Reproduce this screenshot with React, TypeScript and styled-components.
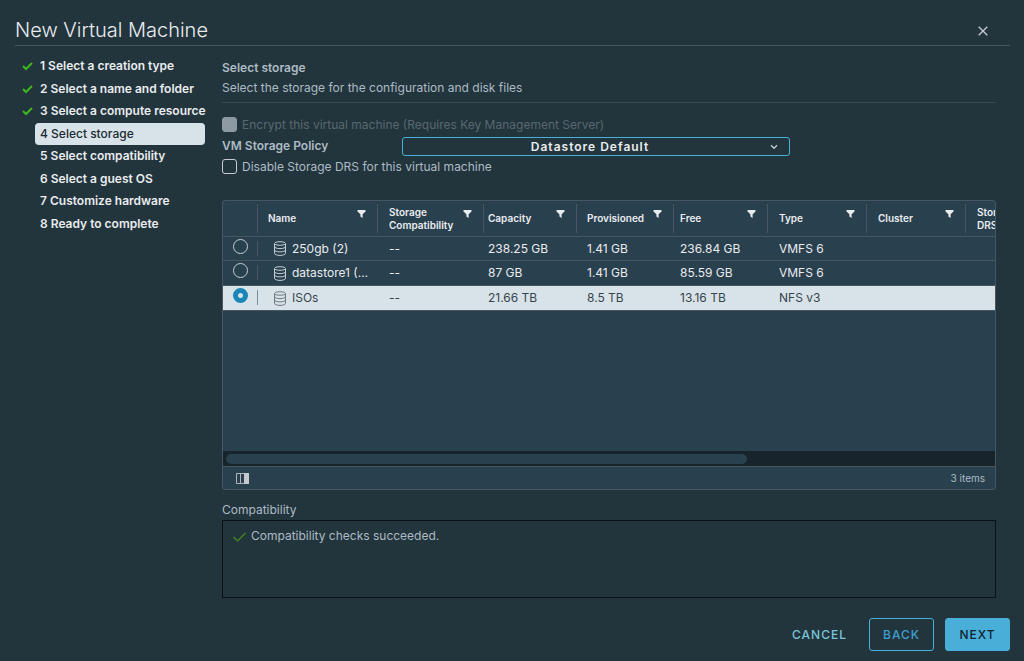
import React, { useState } from "react";
import styled, { createGlobalStyle, css } from "styled-components";

const color = {
  page: "#22343c",
  panel: "#29404e",
  line: "#465763",
  text: "#adbbc4",
  strong: "#e9ecef",
  selected: "#d8e3e9",
  accent: "#49afd9",
  track: "#17242b",
};

const GlobalStyle = createGlobalStyle`
  *, *::before, *::after { box-sizing: border-box; }
  body {
    margin: 0;
    background: ${color.page};
    color: ${color.text};
    font: 400 12px/20px Inter, "Liberation Sans", sans-serif;
  }
  button, input, select { font: inherit; color: inherit; margin: 0; }
`;

const Wizard = styled.main`
  min-height: 100vh;
  display: flex;
  flex-direction: column;
  padding: 15px 14px 10px 15px;
`;

const Header = styled.header`
  display: flex;
  align-items: center;
  justify-content: space-between;
  height: 31px;
  padding-right: 19px;
  border-bottom: 1px solid ${color.line};
`;

const Title = styled.h1`
  margin: 0;
  font-size: 20px;
  line-height: 30px;
  font-weight: 300;
  color: ${color.strong};
`;

const CloseButton = styled.button`
  display: flex;
  padding: 4px 2px 2px;
  border: 0;
  background: none;
  color: #c5cdd2;
`;

const Body = styled.div`
  flex: 1;
  display: flex;
  gap: 17px;
  padding: 8px 14px 20px 0;
`;

const Steps = styled.ol`
  flex: none;
  display: grid;
  grid-auto-rows: 1fr;
  width: 190px;
  height: 180px;
  margin: 1px 0 0;
  padding: 0;
  list-style: none;
`;

const Step = styled.li`
  display: grid;
  grid-template-columns: 20px 1fr;
  align-items: center;
`;

const StepMark = styled.span`
  display: flex;
  padding-left: 7px;
`;

const StepButton = styled.button<{ $current?: boolean }>`
  min-width: 0;
  height: 100%;
  padding: 0 0 0 5px;
  border: 0;
  border-radius: 4px;
  background: ${(p) => (p.$current ? color.selected : "none")};
  color: ${(p) => (p.$current ? "#1b2a32" : color.strong)};
  font-weight: ${(p) => (p.$current ? 500 : 600)};
  text-align: left;
  white-space: nowrap;
`;

const Content = styled.section`
  flex: 1;
  min-width: 0;
  display: flex;
  flex-direction: column;
`;

const Intro = styled.div`
  padding: 4px 0;
  border-bottom: 1px solid #3a4a55;
  margin-bottom: 11px;
`;

const PageTitle = styled.h2`
  margin: 0;
  font-size: 12px;
  line-height: 20px;
  font-weight: 600;
`;

const IntroText = styled.p`
  margin: 0;
`;

const OptionRow = styled.div<{ $disabled?: boolean }>`
  display: flex;
  align-items: center;
  gap: 5px;
  height: 21px;
  color: ${(p) => (p.$disabled ? "#596870" : color.text)};
`;

const Checkbox = styled.input`
  appearance: none;
  width: 15px;
  height: 15px;
  border: 1px solid #c5cdd2;
  border-radius: 3px;
  &:disabled { background: #8d9aa2; border-color: #8d9aa2; }
  &:checked { background: ${color.accent}; }
`;

const PolicyLabel = styled.label`
  width: 175px;
  font-weight: 600;
`;

const SelectFrame = styled.div`
  display: grid;
  flex: 0 1 388px;
  align-self: flex-end;
  align-items: center;
  & > * { grid-area: 1 / 1; }
  svg { justify-self: end; margin-right: 12px; pointer-events: none; }
`;

const PolicySelect = styled.select`
  appearance: none;
  width: 100%;
  height: 19px;
  padding: 0 20px 0 8px;
  border: 1px solid ${color.accent};
  border-radius: 3px;
  background: ${color.page};
  color: ${color.strong};
  line-height: 16px;
  font-weight: 600;
  letter-spacing: 1px;
  text-align-last: center;
`;

const Datagrid = styled.div`
  flex: 1;
  display: flex;
  flex-direction: column;
  margin-top: 23px;
  border: 1px solid ${color.line};
  border-radius: 3px;
  background: ${color.panel};
  overflow: hidden;
`;

const TableViewport = styled.div`
  flex: 1;
  overflow: hidden;
`;

const Table = styled.table`
  table-layout: fixed;
  width: 1148px;
  border-collapse: separate;
  border-spacing: 0;
  font-size: 12px;
  color: ${color.strong};
  tbody tr:first-child td { height: 24px; }
`;

const Col = styled.col<{ $width: number }>`
  width: ${(p) => p.$width}px;
`;

const HeadCell = styled.th<{ $pad: number }>`
  height: 36px;
  padding: 3px 0;
  border-bottom: 1px solid ${color.line};
  text-align: left;
  vertical-align: middle;
  font-size: 10px;
  line-height: 13px;
  font-weight: 600;
  & > div {
    display: flex;
    align-items: center;
    justify-content: space-between;
    height: 29px;
    padding: 0 11px 0 ${(p) => p.$pad}px;
    border-right: 1px solid ${color.line};
  }
`;

const HeadLabel = styled.span`
  white-space: pre-line;
`;

const FilterButton = styled.button`
  display: flex;
  align-self: flex-start;
  padding: 6px 0 0;
  border: 0;
  background: none;
`;

const cellTone = css<{ $selected?: boolean }>`
  background: ${(p) => (p.$selected ? color.selected : "none")};
  color: ${(p) => (p.$selected ? "#37444c" : color.strong)};
`;

const Cell = styled.td<{ $pad: number; $selected?: boolean }>`
  height: 25px;
  padding: 0 0 0 ${(p) => p.$pad}px;
  border-bottom: 1px solid ${color.line};
  line-height: 20px;
  white-space: nowrap;
  ${cellTone}
`;

const PickCell = styled.td<{ $selected?: boolean }>`
  height: 25px;
  padding: 4px 0 0;
  border-bottom: 1px solid ${color.line};
  vertical-align: top;
  ${cellTone}
  & > div {
    display: flex;
    height: 15px;
    padding-left: 10px;
    border-right: 1px solid ${(p) => (p.$selected ? "#7b8b95" : color.line)};
  }
`;

const Radio = styled.input`
  appearance: none;
  width: 15px;
  height: 15px;
  border: 1px solid #c5cdd2;
  border-radius: 50%;
  && { margin-top: -2px; }
  &:checked {
    border: 5px solid #1a86b8;
    background: ${color.selected};
    background-clip: padding-box;
  }
`;

const NameLabel = styled.label`
  display: flex;
  align-items: center;
  gap: 5px;
`;

const NameText = styled.span`
  max-width: 80px;
  overflow: hidden;
  text-overflow: ellipsis;
`;

const ScrollTrack = styled.div`
  height: 15px;
  padding: 3px;
  background: ${color.track};
`;

const ScrollThumb = styled.div`
  width: 68%;
  height: 10px;
  border-radius: 5px;
  background: ${color.panel};
`;

const GridFooter = styled.footer`
  display: flex;
  align-items: center;
  justify-content: space-between;
  height: 23px;
  padding: 0 10px 0 13px;
  border-top: 1px solid ${color.line};
  font-size: 10px;
`;

const ColumnsButton = styled.button`
  display: flex;
  padding: 0;
  border: 0;
  background: none;
`;

const CompatHeading = styled.h3`
  margin: 10px 0 0;
  font-size: 12px;
  line-height: 20px;
  font-weight: 400;
`;

const CompatBox = styled.div`
  display: flex;
  gap: 5px;
  min-height: 78px;
  padding: 5px 10px;
  border: 1px solid #0b1216;
  svg { margin-top: 5px; }
`;

const Actions = styled.footer`
  display: flex;
  justify-content: flex-end;
  gap: 11px;
`;

const ActionButton = styled.button<{ $kind: "link" | "outline" | "solid" }>`
  min-width: 65px;
  height: 33px;
  padding: 0 10px;
  border: 1px solid ${(p) => (p.$kind === "link" ? "transparent" : color.accent)};
  border-radius: 3px;
  background: ${(p) => (p.$kind === "solid" ? color.accent : "none")};
  color: ${(p) => ({ link: "#79c6d8", outline: "#3f9fd0", solid: "#10232e" })[p.$kind]};
  font-weight: 500;
  letter-spacing: 1px;
`;

const DoneIcon = () => (
  <svg width="11" height="10" viewBox="0 0 11 10" fill="none" stroke="#3fb81f" strokeWidth="2">
    <path d="M1 5l3 3 6-6" />
  </svg>
);

const FilterIcon = () => (
  <svg width="9" height="8" viewBox="0 0 9 8" fill={color.strong}>
    <path d="M.5 0h8v1.4L5.6 4.3V8L3.4 6.6V4.3L.5 1.4z" />
  </svg>
);

const DatastoreIcon = ({ muted }: { muted?: boolean }) => (
  <svg width="14" height="15" viewBox="0 0 14 15" fill="none" stroke={muted ? "#717a80" : "#c5cdd2"}>
    <ellipse cx="7" cy="2.500" rx="5.500" ry="1.800" />
    <path d="M1.500 2.500v9.800c0 1.200 2.500 2.100 5.500 2.100s5.500-.9 5.500-2.100V2.500" />
    <path d="M1.500 5.600c0 1.200 2.500 2 5.500 2s5.500-.8 5.500-2M1.500 8.900c0 1.200 2.500 2 5.500 2s5.500-.8 5.500-2" />
  </svg>
);

const steps = [
  "Select a creation type",
  "Select a name and folder",
  "Select a compute resource",
  "Select storage",
  "Select compatibility",
  "Select a guest OS",
  "Customize hardware",
  "Ready to complete",
];
const current = 3;

const columns = [
  { label: "Name", width: 120, pad: 10 },
  { label: "Storage\nCompatibility", width: 106, pad: 11 },
  { label: "Capacity", width: 93, pad: 4 },
  { label: "Provisioned", width: 97, pad: 10 },
  { label: "Free", width: 94, pad: 6 },
  { label: "Type", width: 99, pad: 11 },
  { label: "Cluster", width: 99, pad: 11 },
  { label: "Storage\nDRS", width: 405, pad: 11 },
];

const datastores = [
  { name: "250gb (2)", cells: ["--", "238.25 GB", "1.41 GB", "236.84 GB", "VMFS 6", "", ""] },
  { name: "datastore1 (10)", cells: ["--", "87 GB", "1.41 GB", "85.59 GB", "VMFS 6", "", ""] },
  { name: "ISOs", cells: ["--", "21.66 TB", "8.5 TB", "13.16 TB", "NFS v3", "", ""] },
];

export default function App() {
  const [picked, setPicked] = useState("ISOs");

  return (
    <Wizard>
      <GlobalStyle />
      <Header>
        <Title>New Virtual Machine</Title>
        <CloseButton aria-label="Close">
          <svg width="12" height="12" viewBox="0 0 12 12" stroke="currentColor" strokeWidth="1.3">
            <path d="M1.700 1.700l8.600 8.600M10.300 1.700l-8.600 8.600" />
          </svg>
        </CloseButton>
      </Header>
      <Body>
        <Steps>
          {steps.map((label, i) => (
            <Step key={label}>
              <StepMark>{i < current && <DoneIcon />}</StepMark>
              <StepButton $current={i === current} aria-current={i === current ? "step" : undefined}>
                {i + 1} {label}
              </StepButton>
            </Step>
          ))}
        </Steps>
        <Content>
          <Intro>
            <PageTitle>Select storage</PageTitle>
            <IntroText>Select the storage for the configuration and disk files</IntroText>
          </Intro>
          <OptionRow $disabled>
            <Checkbox type="checkbox" id="encrypt" disabled />
            <label htmlFor="encrypt">Encrypt this virtual machine (Requires Key Management Server)</label>
          </OptionRow>
          <OptionRow>
            <PolicyLabel htmlFor="policy">VM Storage Policy</PolicyLabel>
            <SelectFrame>
              <PolicySelect id="policy">
                <option>Datastore Default</option>
              </PolicySelect>
              <svg width="8" height="6" viewBox="0 0 8 6" fill="none" stroke="#c5cdd2" strokeWidth="1.3">
                <path d="M1 1.300l3 3 3-3" />
              </svg>
            </SelectFrame>
          </OptionRow>
          <OptionRow>
            <Checkbox type="checkbox" id="drs" />
            <label htmlFor="drs">Disable Storage DRS for this virtual machine</label>
          </OptionRow>
          <Datagrid>
            <TableViewport>
              <Table>
                <colgroup>
                  <Col $width={35} />
                  {columns.map((c) => (
                    <Col key={c.label} $width={c.width} />
                  ))}
                </colgroup>
                <thead>
                  <tr>
                    <HeadCell $pad={0}>
                      <div />
                    </HeadCell>
                    {columns.map((c) => (
                      <HeadCell key={c.label} $pad={c.pad} scope="col">
                        <div>
                          <HeadLabel>{c.label}</HeadLabel>
                          <FilterButton aria-label={`Filter ${c.label}`}>
                            <FilterIcon />
                          </FilterButton>
                        </div>
                      </HeadCell>
                    ))}
                  </tr>
                </thead>
                <tbody>
                  {datastores.map((d) => {
                    const on = d.name === picked;
                    return (
                      <tr key={d.name}>
                        <PickCell $selected={on}>
                          <div>
                            <Radio
                              type="radio"
                              name="datastore"
                              id={d.name}
                              checked={on}
                              onChange={() => setPicked(d.name)}
                            />
                          </div>
                        </PickCell>
                        <Cell $pad={15} $selected={on}>
                          <NameLabel htmlFor={d.name}>
                            <DatastoreIcon muted={on} />
                            <NameText>{d.name}</NameText>
                          </NameLabel>
                        </Cell>
                        {d.cells.map((value, i) => (
                          <Cell key={i} $pad={columns[i + 1].pad} $selected={on}>
                            {value}
                          </Cell>
                        ))}
                      </tr>
                    );
                  })}
                </tbody>
              </Table>
            </TableViewport>
            <ScrollTrack>
              <ScrollThumb />
            </ScrollTrack>
            <GridFooter>
              <ColumnsButton aria-label="Show columns">
                <svg width="13" height="11" viewBox="0 0 13 11">
                  <path d="M.5 .5h12v10H.5zM4.500 .5v10" fill="none" stroke="#aeb4b8" />
                  <path d="M8 0h5v11H8z" fill="#c5c9cc" />
                </svg>
              </ColumnsButton>
              <span>3 items</span>
            </GridFooter>
          </Datagrid>
          <CompatHeading>Compatibility</CompatHeading>
          <CompatBox>
            <svg width="13" height="12" viewBox="0 0 13 12" fill="none" stroke="#4d8c1c" strokeWidth="1.2">
              <path d="M.5 6l4.200 4L12.500 2" />
            </svg>
            <span>Compatibility checks succeeded.</span>
          </CompatBox>
        </Content>
      </Body>
      <Actions>
        <ActionButton $kind="link">CANCEL</ActionButton>
        <ActionButton $kind="outline">BACK</ActionButton>
        <ActionButton $kind="solid">NEXT</ActionButton>
      </Actions>
    </Wizard>
  );
}
